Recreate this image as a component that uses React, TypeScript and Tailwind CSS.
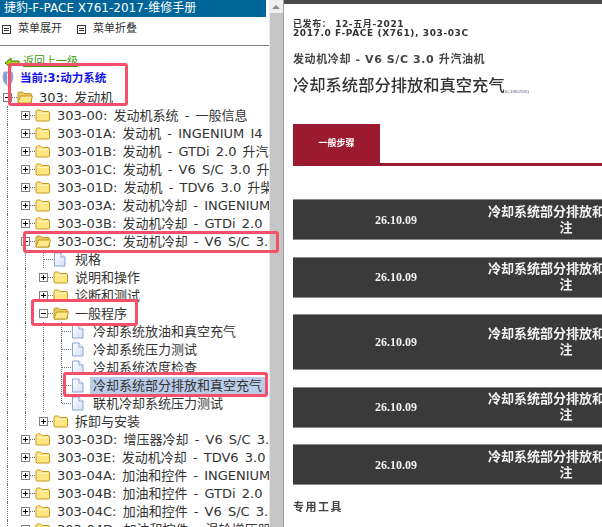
import type { ReactNode } from 'react';

const SANS = "font-['DejaVu_Sans','Noto_Sans_CJK_SC',sans-serif]";
const SERIF = "font-['Liberation_Serif','Noto_Sans_CJK_SC',serif]";

type Row = {
  depth: number;
  kind: 'open' | 'closed' | 'page';
  label: string;
  selected?: boolean;
  last?: boolean;
};

const c = (label: string): Row => ({ depth: 1, kind: 'closed', label });
const sub = (label: string, kind: Row['kind'] = 'closed'): Row => ({ depth: 2, kind, label });
const leaf = (label: string, selected = false, last = false): Row => ({ depth: 3, kind: 'page', label, selected, last });

const rows: Row[] = [
  { depth: 0, kind: 'open', label: '303: 发动机' },
  c('303-00: 发动机系统 - 一般信息'),
  c('303-01A: 发动机 - INGENIUM I4 2.0 升柴油机'),
  c('303-01B: 发动机 - GTDi 2.0 升汽油机'),
  c('303-01C: 发动机 - V6 S/C 3.0 升汽油机'),
  c('303-01D: 发动机 - TDV6 3.0 升柴油机'),
  c('303-03A: 发动机冷却 - INGENIUM I4 2.0 升柴油机'),
  c('303-03B: 发动机冷却 - GTDi 2.0 升汽油机'),
  { depth: 1, kind: 'open', label: '303-03C: 发动机冷却 - V6 S/C 3.0 升汽油机' },
  sub('规格', 'page'),
  sub('说明和操作'),
  sub('诊断和测试'),
  sub('一般程序', 'open'),
  leaf('冷却系统放油和真空充气'),
  leaf('冷却系统压力测试'),
  leaf('冷却系统浓度检查'),
  leaf('冷却系统部分排放和真空充气', true),
  leaf('联机冷却系统压力测试', false, true),
  sub('拆卸与安装'),
  c('303-03D: 增压器冷却 - V6 S/C 3.0 升汽油机'),
  c('303-03E: 发动机冷却 - TDV6 3.0 升柴油机'),
  c('303-04A: 加油和控件 - INGENIUM I4 2.0 升柴油机'),
  c('303-04B: 加油和控件 - GTDi 2.0 升汽油机'),
  c('303-04C: 加油和控件 - V6 S/C 3.0 升汽油机'),
  c('303-04D: 加油和控件 - 涡轮增压器'),
];

function Folder({ open }: { open: boolean }) {
  return (
    <svg width="16" height="14" viewBox="0 0 16 14" className="shrink-0">
      <path d="M1 3.5 Q1 2 2.5 2 H5.5 L7 3.5 H13 Q14.5 3.5 14.5 5 V12 Q14.5 13 13.5 13 H2 Q1 13 1 12 Z" fill={open ? '#e8c860' : '#ffe680'} stroke="#c49a22" />
      {open ? (
        <path d="M3.5 6 H15.5 L13.5 13 H1 Z" fill="#ffe98c" stroke="#c49a22" strokeLinejoin="round" />
      ) : (
        <path d="M2 5 H13.5 V6 H2 Z" fill="#fff6c4" />
      )}
    </svg>
  );
}

function Page() {
  return (
    <svg width="13" height="15" viewBox="0 0 13 15" className="shrink-0">
      <defs>
        <linearGradient id="pg" x1="0" y1="0" x2="1" y2="1">
          <stop offset="0" stopColor="#ffffff" />
          <stop offset="1" stopColor="#d3e0f6" />
        </linearGradient>
      </defs>
      <path d="M1.5 1 H8 L12 5 V14 H1.5 Z" fill="url(#pg)" stroke="#8aa4d6" />
      <path d="M8 1 V5 H12" fill="#fff" stroke="#8aa4d6" />
    </svg>
  );
}

function Expander({ open }: { open: boolean }) {
  return (
    <div className="w-[9px] h-[9px] border border-[#808080] bg-white relative shrink-0">
      <div className="absolute left-[1px] right-[1px] top-[3px] h-[1px] bg-black" />
      {!open && <div className="absolute top-[1px] bottom-[1px] left-[3px] w-[1px] bg-black" />}
    </div>
  );
}

function TreeRow({ row }: { row: Row }) {
  const isPage = row.kind === 'page';
  const cells: ReactNode[] = [];
  for (let i = 0; i < row.depth; i++) {
    cells.push(
      <div key={i} className="w-[18px] h-full shrink-0 pl-[4px]">
        <div className="h-full border-l border-dotted border-[#707070]" />
      </div>,
    );
  }
  return (
    <div className={`h-[18px] flex items-center whitespace-nowrap pl-[3px] text-[13px] text-[#333] [word-spacing:2px] ${SANS}`}>
      {cells}
      {isPage ? (
        <div className="w-[14px] h-full shrink-0 pl-[4px] flex">
          <div className={`border-l border-dotted border-[#707070] ${row.last ? 'h-1/2' : 'h-full'}`} />
          <div className="flex-1 self-center border-t border-dotted border-[#707070]" />
        </div>
      ) : (
        <>
          <Expander open={row.kind === 'open'} />
          <div className="w-[5px] border-t border-dotted border-[#707070] shrink-0" />
        </>
      )}
      {isPage ? <Page /> : <Folder open={row.kind === 'open'} />}
      <span className={`min-w-0 overflow-hidden leading-[17px] ${isPage ? 'ml-[6px] px-[3px]' : 'ml-[4px] pl-[2px]'} ${row.selected ? 'bg-[#b9cdea]' : ''}`}>
        {row.label}
      </span>
    </div>
  );
}

function MenuIcon() {
  return (
    <div className="w-[9px] h-[9px] border border-[#333] flex flex-col justify-center gap-[1px] px-[1px] shrink-0">
      <div className="h-[1px] bg-[#333]" />
      <div className="h-[1px] bg-[#333]" />
    </div>
  );
}

function Bar({ tall }: { tall?: boolean }) {
  return (
    <div className={`flex items-center bg-[#3a3a3a] border-y border-[#8a8a8a] text-[#f2f2f2] font-bold ${SERIF} ${tall ? 'h-[56px]' : 'h-[41px]'}`}>
      <div className="w-[195px] pl-[11px] text-center text-[12px] shrink-0">26.10.09</div>
      <div className="w-[156px] text-center text-[13px] leading-[16px] shrink-0">
        <div className="whitespace-nowrap">冷却系统部分排放和真空充气</div>
        <div>注</div>
      </div>
    </div>
  );
}

function Notes() {
  return (
    <>
      <div className="absolute left-[8px] top-[63px] w-[120px] h-[43px] border-[3px] border-[#f4506a] rounded-[3px]" />
      <div className="absolute left-[23px] top-[231px] w-[256px] h-[22px] border-[3px] border-[#f4506a] rounded-[3px]" />
      <div className="absolute left-[31px] top-[299px] w-[107px] h-[27px] border-[3px] border-[#f4506a] rounded-[3px]" />
      <div className="absolute left-[63px] top-[372px] w-[205px] h-[25px] border-[3px] border-[#f4506a] rounded-[3px]" />
    </>
  );
}

export default function App() {
  return (
    <div className="relative w-[602px] h-[527px] overflow-hidden flex bg-white">
      <div className="w-[269px] shrink-0 flex flex-col overflow-hidden">
        <div className={`w-[266px] h-[17px] bg-[#006699] text-white text-[12px] leading-[17px] pl-[4px] whitespace-nowrap ${SANS}`}>
          捷豹-F-PACE X761-2017-维修手册
        </div>
        <div className={`h-[28px] pb-[4px] flex items-center text-[11px] text-[#333] ${SANS}`}>
          <div className="ml-[2px] mr-[7px]"><MenuIcon /></div>
          <span className="w-[44px]">菜单展开</span>
          <div className="ml-[15px] mr-[7px]"><MenuIcon /></div>
          <span>菜单折叠</span>
        </div>
        <div className="h-[1px] bg-[#808080] shrink-0" />
        <div className="h-[8px] shrink-0" />
        <div className={`h-[17px] flex items-center text-[11px] text-[#3c9a10] ${SANS}`}>
          <svg width="16" height="12" viewBox="0 0 16 12" className="ml-[4px] shrink-0">
            <path d="M1 6 L7 1 V4 H15 V8 H7 V11 Z" fill="#9fd60c" stroke="#3f7a06" />
          </svg>
          <span className="ml-[3px] underline">返回上一级</span>
        </div>
        <div className={`h-[16px] flex items-center text-[11.5px] font-bold text-[#1414ee] ${SANS}`}>
          <svg width="12" height="16" viewBox="0 0 12 16" className="ml-[2px] shrink-0">
            <path d="M2 1 H10 L11 5 Q11 12 6 15 Q1 12 1 5 Z" fill="#7f9fd4" stroke="#a9a9c9" />
            <path d="M5 2 H7 V14 H5 Z" fill="#dfe7f5" />
          </svg>
          <span className="ml-[6px]">当前:3:动力系统</span>
        </div>
        <div className="h-[1px] shrink-0" />
        <div className="flex-1 overflow-hidden">
          {rows.map((row) => (
            <TreeRow key={row.label} row={row} />
          ))}
        </div>
      </div>

      <div className="w-[15px] shrink-0 flex flex-col bg-[#e8e8e8] border-r border-[#a0a0a0]">
        <div className="h-[13px] flex items-center justify-center bg-[#efefef] shrink-0">
          <div className="w-0 h-0 border-x-[4px] border-x-transparent border-b-[4px] border-b-[#8a8a8a]" />
        </div>
        <div className="flex-1 bg-[#c6c6c6] ml-[1px]" />
      </div>

      <div className="flex-1 min-w-0 flex flex-col overflow-hidden">
        <div className="h-[4px] bg-[#4a4a4a] shrink-0" />
        <div className="pl-[9px] flex flex-col blur-[0.3px]">
          <div className={`mt-[16px] text-[9px] leading-[9px] font-bold text-[#333] tracking-[0.6px] whitespace-nowrap ${SANS}`}>
            <div>已发布： 12-五月-2021</div>
            <div>2017.0 F-PACE (X761), 303-03C</div>
          </div>
          <div className={`mt-[15px] text-[11px] leading-[14px] font-bold text-[#444] tracking-[0.6px] whitespace-nowrap ${SANS}`}>
            发动机冷却 - V6 S/C 3.0 升汽油机
          </div>
          <div className={`mt-[7px] h-[22px] flex items-end text-[16.3px] leading-[20px] font-medium text-[#333] whitespace-nowrap ${SERIF}`}>
            冷却系统部分排放和真空充气
            <span className="text-[5px] leading-[8px] text-[#557]">(G1885926)</span>
          </div>
          <div className="mt-[28px] h-[42px] border-b-[3px] border-[#9b1a2f]">
            <div className={`w-[87px] h-[39px] bg-[#9b1a2f] text-white text-[9px] font-bold flex items-center justify-center ${SANS}`}>
              一般步骤
            </div>
          </div>
          <div className="mt-[33px] flex flex-col gap-[16.5px]">
            <Bar />
            <Bar />
            <Bar tall />
            <Bar />
            <Bar />
          </div>
          <div className={`mt-[15px] text-[11px] leading-[16px] font-bold text-[#444] tracking-[1.5px] ${SANS}`}>专用工具</div>
        </div>
      </div>

      <Notes />
    </div>
  );
}
